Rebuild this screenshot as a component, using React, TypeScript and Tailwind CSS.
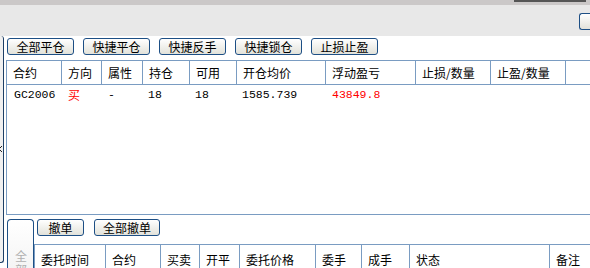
const btn =
  "h-[17px] border border-[#1d4f85] rounded-[3px] bg-linear-to-b from-white to-[#e2e2da] text-[12px] leading-[15px] text-black flex items-center justify-center";

const topCols = [
  { label: '合约', w: 'w-[55px]' },
  { label: '方向', w: 'w-[40px]' },
  { label: '属性', w: 'w-[41px]' },
  { label: '持仓', w: 'w-[47px]' },
  { label: '可用', w: 'w-[47px]' },
  { label: '开仓均价', w: 'w-[89px]' },
  { label: '浮动盈亏', w: 'w-[90px]' },
  { label: '止损/数量', w: 'w-[75px]' },
  { label: '止盈/数量', w: 'w-[75px]' },
];

const orderCols = [
  { label: '委托时间', w: 'w-[71px]' },
  { label: '合约', w: 'w-[55px]' },
  { label: '买卖', w: 'w-[39px]' },
  { label: '开平', w: 'w-[40px]' },
  { label: '委托价格', w: 'w-[76px]' },
  { label: '委手', w: 'w-[46px]' },
  { label: '成手', w: 'w-[48px]' },
  { label: '状态', w: 'w-[140px]' },
  { label: '备注', w: 'w-[60px]' },
];

export default function App() {
  return (
    <div className="w-[590px] h-[268px] overflow-hidden bg-white font-['Noto_Sans_CJK_SC','Liberation_Sans',sans-serif] text-[12px] text-black">
      {/* title strip */}
      <div className="h-[5px] bg-[#cbc8c8] flex justify-end">
        <div className="w-[72px] h-[2px] bg-[#555555] mr-[4px]" />
      </div>
      <div className="h-[31px] bg-[#e8e8e8] flex justify-end items-start pt-[8px]">
        <div className="w-[11px] h-[17px] border-l border-y border-[#1d4f85] rounded-l-[3px] bg-linear-to-b from-white to-[#e2e2da]" />
      </div>

      <div className="flex h-[232px] overflow-hidden">
        {/* collapsed side panel */}
        <div className="w-[4px] h-[227px] shrink-0 border-r border-b border-[#1d3f66] rounded-r-[3px] bg-[#f0f0f0] flex flex-col pt-[110px]">
          <svg width="3" height="6" viewBox="0 0 3 6" className="-ml-[1px]">
            <path d="M3 0 L0 3 L3 6" stroke="#222" strokeWidth="1" fill="none" />
          </svg>
        </div>

        <div className="flex-1 pl-[2px] flex flex-col">
          {/* positions */}
          <div className="flex gap-[9px] pl-[1px] pt-[2px] shrink-0">
            <button className={`${btn} w-[67px]`}>全部平仓</button>
            <button className={`${btn} w-[67px]`}>快捷平仓</button>
            <button className={`${btn} w-[67px]`}>快捷反手</button>
            <button className={`${btn} w-[67px]`}>快捷锁仓</button>
            <button className={`${btn} w-[67px]`}>止损止盈</button>
          </div>

          <div className="mt-[5px] h-[155px] shrink-0 border-l border-b border-[#7a9cc2] flex flex-col">
            <div className="h-[25px] border-y border-[#7a9cc2] flex">
              {topCols.map((c) => (
                <div key={c.label} className={`${c.w} shrink-0 border-r border-[#7a9cc2] pl-[6px] flex items-center`}>
                  {c.label}
                </div>
              ))}
            </div>
            <div className="h-[20px] flex items-center font-['Liberation_Mono',monospace] text-[11.5px]">
              <div className="w-[55px] pl-[7px]">GC2006</div>
              <div className="w-[40px] pl-[6px] text-[#ff0000] font-['Noto_Sans_CJK_SC',sans-serif] text-[12px]">买</div>
              <div className="w-[41px] pl-[6px]">-</div>
              <div className="w-[47px] pl-[5px]">18</div>
              <div className="w-[47px] pl-[5px]">18</div>
              <div className="w-[89px] pl-[5px]">1585.739</div>
              <div className="w-[90px] pl-[6px] text-[#ff0000]">43849.8</div>
            </div>
          </div>

          {/* orders */}
          <div className="flex mt-[4px] h-[60px] shrink-0">
            <div className="w-[27px] ml-[1px] border-x border-t border-[#1d4f85] rounded-t-[4px] bg-linear-to-b from-white to-[#f2f2f2] flex flex-col items-center pt-[30px] text-[#b0b0b0] text-[12px]">
              <span className="[writing-mode:vertical-rl] tracking-[2px] leading-[14px]">全部</span>
            </div>
            <div className="flex-1 flex flex-col">
              <div className="flex gap-[10px] pl-[3px]">
                <button className={`${btn} w-[47px]`}>撤单</button>
                <button className={`${btn} w-[66px]`}>全部撤单</button>
              </div>
              <div className="mt-[8px] h-[30px] shrink-0 border-l border-t border-[#7a9cc2] flex">
                {orderCols.map((c) => (
                  <div key={c.label} className={`${c.w} shrink-0 border-r border-[#7a9cc2] pl-[6px] flex items-center`}>
                    {c.label}
                  </div>
                ))}
              </div>
            </div>
          </div>
        </div>
      </div>
    </div>
  );
}
